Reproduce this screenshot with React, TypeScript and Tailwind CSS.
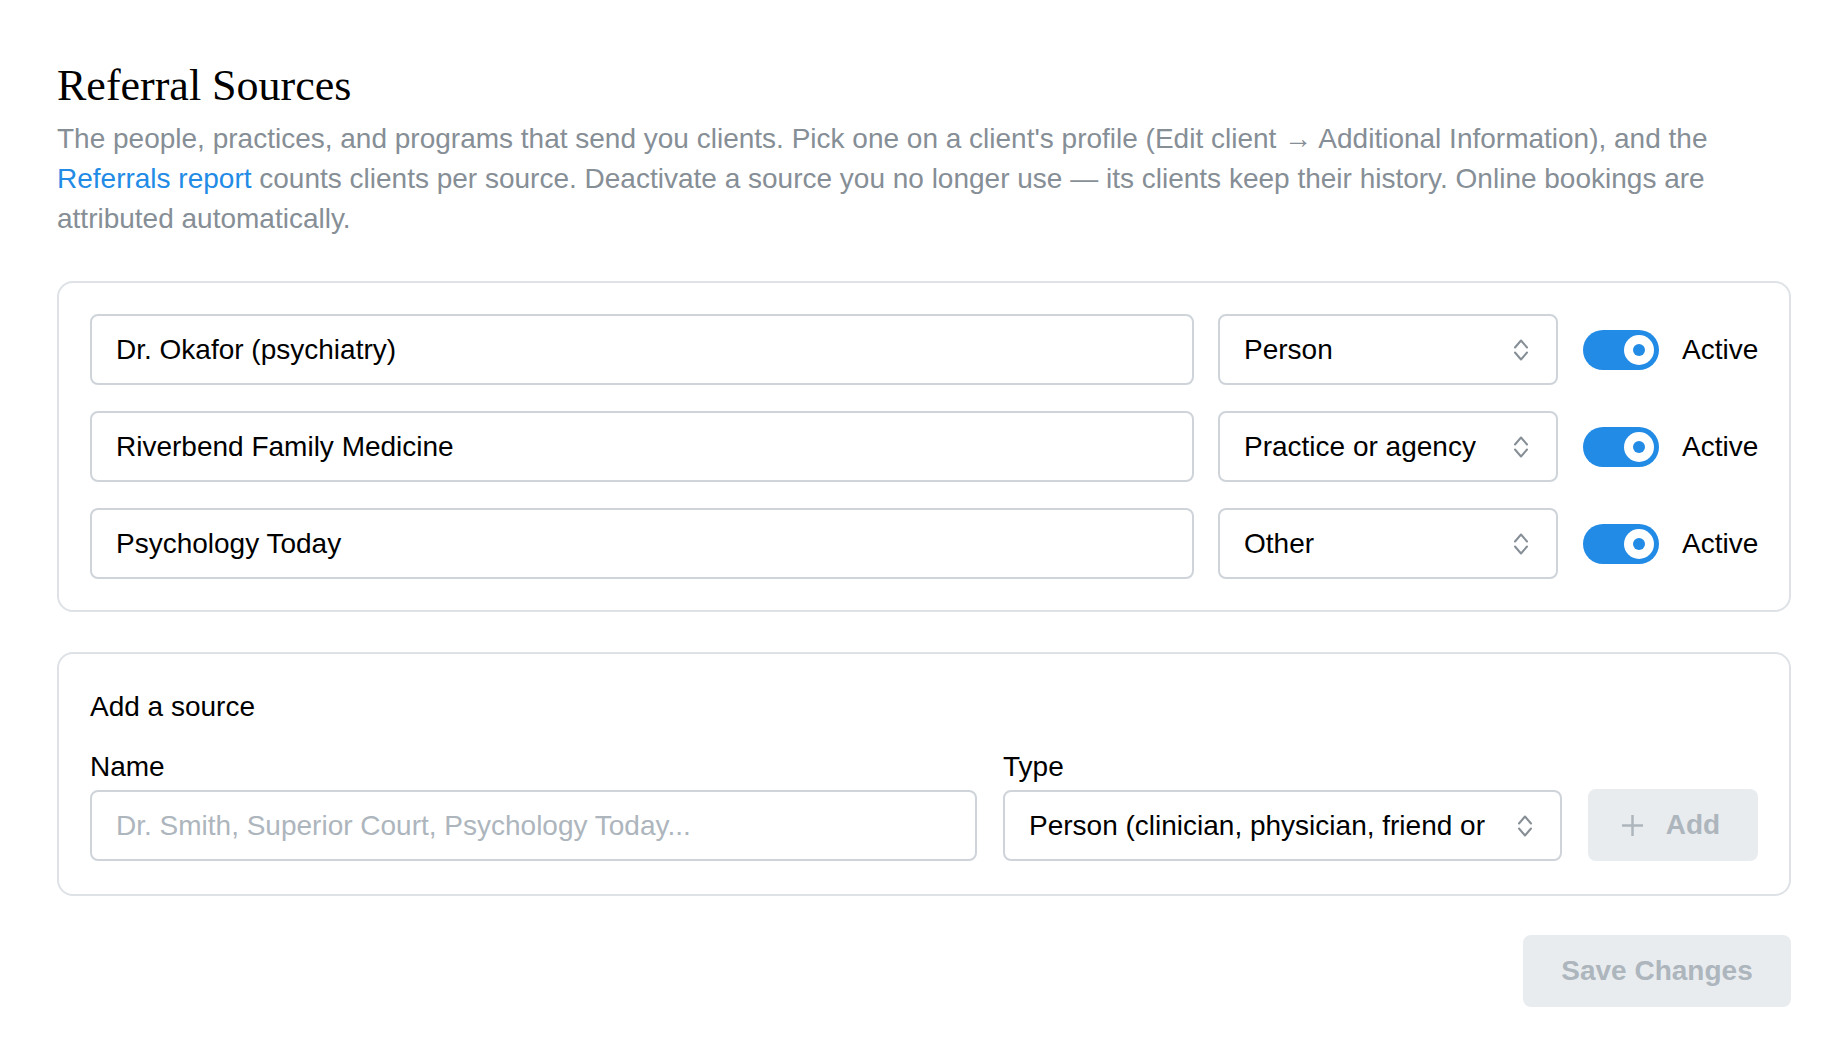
import { useState } from 'react';

type Source = {
  name: string;
  kind: string;
  active: boolean;
};

const initialSources: Source[] = [
  { name: 'Dr. Okafor (psychiatry)', kind: 'Person', active: true },
  { name: 'Riverbend Family Medicine', kind: 'Practice or agency', active: true },
  { name: 'Psychology Today', kind: 'Other', active: true },
];

function UpDownChevron() {
  return (
    <svg
      width="16"
      height="26"
      viewBox="0 0 16 26"
      fill="none"
      stroke="#868e96"
      strokeWidth="2"
      strokeLinecap="round"
      strokeLinejoin="round"
    >
      <path d="M2 10.5 8 3.5l6 7" />
      <path d="M2 15.5 8 22.5l6-7" />
    </svg>
  );
}

function SelectBox({ value, className = '' }: { value: string; className?: string }) {
  return (
    <div
      className={`relative flex h-[71px] shrink-0 items-center rounded-[8px] border-2 border-[#ced4da] bg-white pl-[24px] pr-[68px] ${className}`}
    >
      <span className="overflow-hidden whitespace-nowrap text-[28px] leading-[40px] text-black">
        {value}
      </span>
      <span className="absolute right-[27px] top-1/2 flex -translate-y-1/2">
        <UpDownChevron />
      </span>
    </div>
  );
}

function Toggle({ on, onChange }: { on: boolean; onChange: () => void }) {
  return (
    <button
      type="button"
      onClick={onChange}
      className={`flex h-[40px] w-[76px] shrink-0 items-center rounded-full px-[5px] ${
        on ? 'justify-end bg-[#228be6]' : 'justify-start bg-[#dee2e6]'
      }`}
    >
      <span className="flex h-[30px] w-[30px] items-center justify-center rounded-full bg-white">
        {on && <span className="h-[12px] w-[12px] rounded-full bg-[#228be6]" />}
      </span>
    </button>
  );
}

export default function App() {
  const [sources, setSources] = useState(initialSources);

  const toggle = (i: number) =>
    setSources((s) => s.map((x, j) => (j === i ? { ...x, active: !x.active } : x)));

  return (
    <div className="min-h-screen bg-white px-[57px] pt-[60px] font-['Liberation_Sans',Arial,sans-serif] text-black">
      <h1 className="font-['Liberation_Serif','Times_New_Roman',serif] text-[44px] font-normal leading-[52px]">
        Referral Sources
      </h1>
      <p className="mt-[7px] text-[28px] leading-[40px] text-[#868e96]">
        The people, practices, and programs that send you clients. Pick one on a client's profile
        (Edit client → Additional Information), and the{' '}
        <a className="text-[#228be6]">Referrals report</a> counts clients per source. Deactivate a
        source you no longer use — its clients keep their history. Online bookings are attributed
        automatically.
      </p>

      <div className="mt-[42px] flex flex-col gap-[26px] rounded-[16px] border-2 border-[#dee2e6] p-[31px]">
        {sources.map((s, i) => (
          <div key={s.name} className="flex items-center">
            <input
              defaultValue={s.name}
              className="h-[71px] min-w-0 flex-1 rounded-[8px] border-2 border-[#ced4da] px-[24px] text-[28px] text-black outline-none"
            />
            <SelectBox value={s.kind} className="ml-[24px] w-[340px]" />
            <div className="ml-[25px] flex items-center gap-[23px]">
              <Toggle on={s.active} onChange={() => toggle(i)} />
              <span className="w-[76px] whitespace-nowrap text-[28px] leading-[40px]">
                {s.active ? 'Active' : 'Inactive'}
              </span>
            </div>
          </div>
        ))}
      </div>

      <div className="mt-[40px] rounded-[16px] border-2 border-[#dee2e6] px-[31px] pb-[33px] pt-[33px]">
        <div className="text-[28px] leading-[40px]">Add a source</div>
        <div className="mt-[20px] flex items-end gap-[26px]">
          <div className="flex min-w-0 flex-1 flex-col">
            <label className="mb-[3px] text-[28px] leading-[40px]">Name</label>
            <input
              placeholder="Dr. Smith, Superior Court, Psychology Today..."
              className="h-[71px] rounded-[8px] border-2 border-[#ced4da] px-[24px] text-[28px] text-black outline-none placeholder:text-[#adb5bd]"
            />
          </div>
          <div className="flex w-[559px] shrink-0 flex-col">
            <label className="mb-[3px] text-[28px] leading-[40px]">Type</label>
            <SelectBox value="Person (clinician, physician, friend or family)" className="w-full" />
          </div>
          <button
            type="button"
            disabled
            className="flex h-[72px] w-[170px] shrink-0 items-center justify-center gap-[23px] rounded-[8px] bg-[#e9ecef] pr-[4px] text-[28px] font-bold text-[#adb5bd]"
          >
            <svg width="21" height="21" viewBox="0 0 21 21" fill="none" stroke="#adb5bd" strokeWidth="2.5">
              <path d="M10.5 0v21M0 10.5h21" />
            </svg>
            Add
          </button>
        </div>
      </div>

      <div className="mt-[39px] flex justify-end pb-[54px]">
        <button
          type="button"
          disabled
          className="h-[72px] w-[268px] rounded-[8px] bg-[#e9ecef] text-[28px] font-bold text-[#adb5bd]"
        >
          Save Changes
        </button>
      </div>
    </div>
  );
}
